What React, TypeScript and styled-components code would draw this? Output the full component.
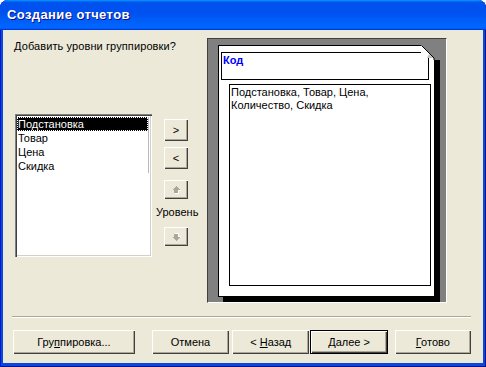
import React from "react";
import styled, { createGlobalStyle } from "styled-components";

const Global = createGlobalStyle`
  html, body { margin: 0; padding: 0; background: #ffffff; }
  body { font-family: "Liberation Sans", Arial, sans-serif; font-size: 11px; color: #000; }
  * { box-sizing: border-box; }
`;

const Window = styled.div`
  width: 486px;
  height: 367px;
  display: flex;
  flex-direction: column;
  background: #0a48dc;
  border-radius: 8px 8px 0 0;
  overflow: hidden;
  padding: 0 3px 4px 3px;
  box-shadow: inset 1px 0 #0019cf, inset -1px 0 #00138c, inset 0 -1px #00138c;
`;

const TitleBar = styled.div`
  height: 30px;
  margin: 0 -3px;
  display: flex;
  align-items: center;
  padding: 0 0 1px 7px;
  background: linear-gradient(
    180deg,
    #0997ff,
    #0053ee 8%,
    #0050ee 40%,
    #0066ff 88%,
    #0066ff 93%,
    #005bff 95%,
    #003dd7 96%,
    #003dd7
  );
  color: #fff;
  font-family: "Liberation Sans", Arial, sans-serif;
  font-weight: bold;
  font-size: 13px;
  text-shadow: 1px 1px #0f1089;
  letter-spacing: 0.4px;
`;

const Client = styled.div`
  flex: 1;
  background: #ece9d8;
  display: flex;
  flex-direction: column;
  padding: 8px 12px 0 9px;
`;

const MainRow = styled.div`
  display: flex;
  height: 265px;
  padding-left: 2px;
`;

const LeftCol = styled.div`
  width: 138px;
  display: flex;
  flex-direction: column;
`;

const Prompt = styled.div`
  margin-top: 2px;
  line-height: 13px;
  white-space: nowrap;
  letter-spacing: 0.1px;
`;

const ListBox = styled.div`
  margin: 61px 0 0 1px;
  width: 137px;
  height: 143px;
  background: #fff;
  padding: 2px;
  box-shadow: inset 1px 1px #808080, inset 2px 2px #404040, inset -1px -1px #ffffff,
    inset -2px -2px #d4d0c8;
`;

const ListItems = styled.div`
  width: 132px;
  border-right: 1px solid #b8b8b8;
  margin-top: 1px;
`;

const ListItem = styled.div<{ $selected?: boolean }>`
  height: 14px;
  line-height: 14px;
  padding-left: 1px;
  white-space: nowrap;
  background: ${(p) => (p.$selected ? "#000" : "transparent")};
  color: ${(p) => (p.$selected ? "#fff" : "#000")};
  outline: ${(p) => (p.$selected ? "1px dotted #fff" : "none")};
  outline-offset: -1px;
`;

const MidCol = styled.div`
  width: 55px;
  padding-left: 12px;
  display: flex;
  flex-direction: column;
  align-items: flex-start;
`;

const SmallButton = styled.button<{ $h: number; $top: number }>`
  width: 24px;
  height: ${(p) => p.$h}px;
  margin-top: ${(p) => p.$top}px;
  padding: 0;
  border: none;
  background: #ece9d8;
  font-family: "Liberation Sans", Arial, sans-serif;
  font-size: 11px;
  color: #000;
  display: flex;
  align-items: center;
  justify-content: center;
  box-shadow: inset 1px 1px #ffffff, inset -1px -1px #404040, inset -2px -2px #aca899;
`;

const LevelLabel = styled.div`
  margin: 7px 0 0 -8px;
  line-height: 13px;
  white-space: nowrap;
`;

const PreviewFrame = styled.div`
  width: 240px;
  height: 265px;
  background: #808080;
  border-top: 1px solid #404040;
  border-left: 1px solid #404040;
  border-right: 1px solid #ffffff;
  border-bottom: 1px solid #ffffff;
  padding: 6px 0 0 10px;
`;

const Page = styled.div`
  position: relative;
  width: 217px;
  height: 252px;
  background: #fff;
  border: 1px solid #000;
  box-shadow: 5px 5px 0 #000;
  padding: 6px 0 0 2px;
`;

const Fold = styled.svg`
  position: absolute;
  top: -1px;
  right: -7px;
  width: 20px;
  height: 15px;
`;

const HeaderBox = styled.div`
  width: 208px;
  height: 28px;
  border: 1px solid #000;
  padding: 1px 0 0 1px;
  color: #0000ff;
  font-weight: bold;
  line-height: 13px;
`;

const BodyBox = styled.div`
  margin: 4px 0 0 8px;
  width: 202px;
  height: 202px;
  border: 1px solid #000;
  padding: 1px 0 0 1px;
  line-height: 13px;
`;

const Separator = styled.div`
  margin-top: 13px;
  height: 2px;
  border-top: 1px solid #aca899;
  border-bottom: 1px solid #ffffff;
`;

const ButtonRow = styled.div`
  display: flex;
  margin-top: 12px;
  padding-left: 1px;
`;

const DlgButton = styled.button<{ $w: number; $gap?: number; $default?: boolean }>`
  width: ${(p) => p.$w}px;
  height: 24px;
  margin-left: ${(p) => p.$gap ?? 0}px;
  padding: 0;
  background: #ece9d8;
  font-family: "Liberation Sans", Arial, sans-serif;
  font-size: 11px;
  color: #000;
  border: ${(p) => (p.$default ? "1px solid #000" : "none")};
  box-shadow: inset 1px 1px #ffffff, inset -1px -1px #404040, inset -2px -2px #aca899;
  white-space: nowrap;
  u {
    text-decoration: underline;
    text-underline-offset: 1px;
  }
`;

const ArrowIcon = ({ down }: { down?: boolean }) => (
  <svg
    width="9"
    height="8"
    viewBox="0 0 9 8"
    shapeRendering="crispEdges"
    style={{ transform: down ? "scaleY(-1)" : undefined, display: "block" }}
  >
    <path d="M4 0 L8 4 L6 4 L6 7 L2 7 L2 4 L0 4 Z" fill="#ffffff" transform="translate(1 1)" />
    <path d="M4 0 L8 4 L6 4 L6 7 L2 7 L2 4 L0 4 Z" fill="#aca899" />
  </svg>
);

export default function App() {
  return (
    <>
      <Global />
      <Window>
        <TitleBar>Создание отчетов</TitleBar>
        <Client>
          <MainRow>
            <LeftCol>
              <Prompt>Добавить уровни группировки?</Prompt>
              <ListBox>
                <ListItems>
                  <ListItem $selected>Подстановка</ListItem>
                  <ListItem>Товар</ListItem>
                  <ListItem>Цена</ListItem>
                  <ListItem>Скидка</ListItem>
                </ListItems>
              </ListBox>
            </LeftCol>
            <MidCol>
              <SmallButton $h={22} $top={81}>&gt;</SmallButton>
              <SmallButton $h={22} $top={6}>&lt;</SmallButton>
              <SmallButton $h={19} $top={11}>
                <ArrowIcon />
              </SmallButton>
              <LevelLabel>Уровень</LevelLabel>
              <SmallButton $h={19} $top={8}>
                <ArrowIcon down />
              </SmallButton>
            </MidCol>
            <PreviewFrame>
              <Page>
                <Fold viewBox="0 0 20 15">
                  <polygon points="0,0 20,0 20,15 13,15 13,13" fill="#808080" />
                  <polygon points="0,0 13,13 0,13" fill="#ffffff" />
                  <polygon points="6,13 13,13 8,9" fill="#c0c0c0" />
                  <line x1="0.5" y1="0.5" x2="13" y2="13" stroke="#000" strokeWidth="1" />
                  <line x1="13" y1="13" x2="13" y2="15" stroke="#000" strokeWidth="1" />
                </Fold>
                <HeaderBox>Код</HeaderBox>
                <BodyBox>
                  Подстановка, Товар, Цена,
                  <br />
                  Количество, Скидка
                </BodyBox>
              </Page>
            </PreviewFrame>
          </MainRow>
          <Separator />
          <ButtonRow>
            <DlgButton $w={123}>
              Гру<u>п</u>пировка...
            </DlgButton>
            <DlgButton $w={78} $gap={17}>
              Отмена
            </DlgButton>
            <DlgButton $w={78} $gap={3}>
              &lt; <u>Н</u>азад
            </DlgButton>
            <DlgButton $w={78} $gap={1} $default>
              <u>Д</u>алее &gt;
            </DlgButton>
            <DlgButton $w={77} $gap={7}>
              <u>Г</u>отово
            </DlgButton>
          </ButtonRow>
        </Client>
      </Window>
    </>
  );
}
